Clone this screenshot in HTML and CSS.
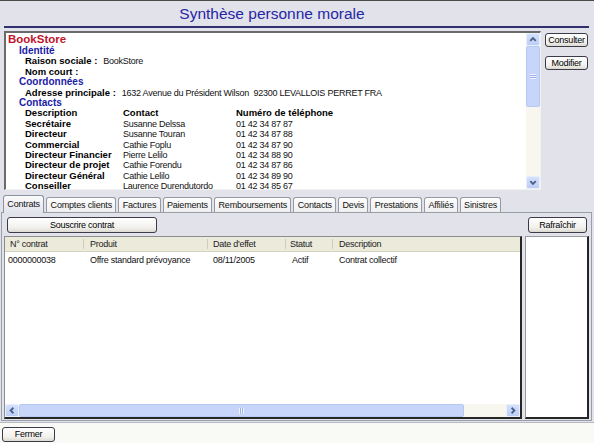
FILE: index.html
```html
<!DOCTYPE html>
<html lang="fr">
<head>
<meta charset="utf-8">
<title>Synthèse personne morale</title>
<link rel="stylesheet" href="styles.css">
</head>
<body>
<div class="window">
  <header class="head">
    <h1 class="title">Synthèse personne morale</h1>
    <div class="rule"></div>
  </header>

  <section class="top">
    <div class="info">
      <div class="info-body">
        <div class="company">BookStore</div>
        <div class="section">Identité</div>
        <div class="field"><b>Raison sociale :</b><span class="val">BookStore</span></div>
        <div class="field"><b>Nom court :</b></div>
        <div class="section">Coordonnées</div>
        <div class="field"><b>Adresse principale :</b><span class="val">1632 Avenue du Président Wilson&nbsp; 92300 LEVALLOIS PERRET FRA</span></div>
        <div class="section">Contacts</div>
        <div class="contacts">
          <b>Description</b><b>Contact</b><b>Numéro de téléphone</b>
          <b>Secrétaire</b><span>Susanne Delssa</span><span>01 42 34 87 87</span>
          <b>Directeur</b><span>Susanne Touran</span><span>01 42 34 87 88</span>
          <b>Commercial</b><span>Cathie Foplu</span><span>01 42 34 87 90</span>
          <b>Directeur Financier</b><span>Pierre Lelilo</span><span>01 42 34 88 90</span>
          <b>Directeur de projet</b><span>Cathie Forendu</span><span>01 42 34 87 86</span>
          <b>Directeur Général</b><span>Cathie Lelilo</span><span>01 42 34 89 90</span>
          <b>Conseiller</b><span>Laurence Durendutordo</span><span>01 42 34 85 67</span>
        </div>
      </div>
      <div class="vscroll">
        <div class="sb-btn"><svg width="13" height="13" viewBox="0 0 13 13"><polyline points="3.5,8 6.5,5 9.5,8" fill="none" stroke="#4d6185" stroke-width="2"/></svg></div>
        <div class="sb-thumb v"><span class="grip"></span></div>
        <div class="sb-track"></div>
        <div class="sb-btn"><svg width="13" height="13" viewBox="0 0 13 13"><polyline points="3.5,5 6.5,8 9.5,5" fill="none" stroke="#4d6185" stroke-width="2"/></svg></div>
      </div>
    </div>
    <div class="side">
      <button class="btn small">Consulter</button>
      <button class="btn small">Modifier</button>
    </div>
  </section>

  <nav class="tabs">
    <span class="tab active">Contrats</span>
    <span class="tab">Comptes clients</span>
    <span class="tab">Factures</span>
    <span class="tab">Paiements</span>
    <span class="tab">Remboursements</span>
    <span class="tab">Contacts</span>
    <span class="tab">Devis</span>
    <span class="tab">Prestations</span>
    <span class="tab">Affiliés</span>
    <span class="tab">Sinistres</span>
  </nav>

  <section class="panel">
    <div class="toolbar">
      <button class="btn wide">Souscrire contrat</button>
      <button class="btn refresh">Rafraîchir</button>
    </div>
    <div class="content">
      <div class="list">
        <div class="list-head">
          <span class="c1">N° contrat</span>
          <span class="c2">Produit</span>
          <span class="c3">Date d'effet</span>
          <span class="c4">Statut</span>
          <span class="c5">Description</span>
        </div>
        <div class="list-row">
          <span class="c1">0000000038</span>
          <span class="c2">Offre standard prévoyance</span>
          <span class="c3">08/11/2005</span>
          <span class="c4">Actif</span>
          <span class="c5">Contrat collectif</span>
        </div>
        <div class="list-fill"></div>
        <div class="hscroll">
          <div class="sb-btn h"><svg width="13" height="13" viewBox="0 0 13 13"><polyline points="8,3.5 5,6.5 8,9.5" fill="none" stroke="#4d6185" stroke-width="2"/></svg></div>
          <div class="sb-thumb hz"><span class="grip"></span></div>
          <div class="sb-track"></div>
          <div class="sb-btn h"><svg width="13" height="13" viewBox="0 0 13 13"><polyline points="5,3.5 8,6.5 5,9.5" fill="none" stroke="#4d6185" stroke-width="2"/></svg></div>
        </div>
      </div>
      <div class="aside"></div>
    </div>
  </section>

  <footer class="foot">
    <button class="btn close">Fermer</button>
  </footer>
</div>
</body>
</html>
```

FILE: styles.css
```css
* { box-sizing: border-box; }

html, body {
  margin: 0;
  padding: 0;
}

body {
  width: 594px;
  height: 443px;
  overflow: hidden;
  background: #e2e2eb;
  font-family: "Liberation Sans", Arial, sans-serif;
  font-size: 9px;
  color: #111;
}

.window {
  display: flex;
  flex-direction: column;
  height: 443px;
  border-top: 1px solid #4a4a4a;
}

/* header */
.head {
  padding: 0 5px 0 4px;
}

.title {
  margin: 0;
  width: 536px;
  padding-top: 1px;
  height: 25px;
  line-height: 24px;
  text-align: center;
  font-size: 15.5px;
  font-weight: normal;
  color: #2626a6;
}

.rule {
  height: 2px;
  background: #30306e;
}

/* top info */
.top {
  display: flex;
  margin-top: 3px;
  padding-left: 4px;
}

.info {
  display: flex;
  width: 537px;
  height: 159px;
  background: #fff;
  border-top: 2px solid #6a6a6a;
  border-left: 2px solid #6a6a6a;
  border-right: 1px solid #f2f2f2;
  border-bottom: 1px solid #f2f2f2;
}

.info-body {
  flex: 1;
  overflow: hidden;
  white-space: nowrap;
}

.company {
  height: 13px;
  line-height: 13px;
  padding-left: 2px;
  font-size: 11.5px;
  font-weight: bold;
  color: #c0142c;
}

.section {
  height: 10.4px;
  line-height: 10.4px;
  padding-left: 13px;
  font-size: 10px;
  font-weight: bold;
  color: #1c1ca8;
}

.field {
  height: 10.4px;
  line-height: 10.4px;
  padding-left: 19px;
}

.field b,
.contacts b {
  font-size: 9.5px;
  font-weight: bold;
  color: #000;
}

.val,
.contacts span,
.btn,
.list-head,
.list-row {
  letter-spacing: -0.25px;
}

.val {
  margin-left: 6px;
}

.contacts {
  display: grid;
  grid-template-columns: 98px 113px auto;
  grid-auto-rows: 10.4px;
  line-height: 10.4px;
  padding-left: 19px;
}

/* scrollbars */
.vscroll {
  width: 14px;
  display: flex;
  flex-direction: column;
  background: #f6f5ee;
}

.sb-btn {
  width: 14px;
  height: 13px;
  flex: none;
  display: flex;
  align-items: center;
  justify-content: center;
  background: linear-gradient(#d4e0fc, #bccdf6);
  border: 1px solid #e8eefc;
  border-radius: 2px;
}

.sb-thumb {
  flex: none;
  display: flex;
  align-items: center;
  justify-content: center;
  background: #c6d5f9;
  border: 1px solid #b6c9f3;
  border-radius: 2px;
}

.sb-thumb.v {
  height: 61px;
}

.sb-thumb .grip {
  width: 6px;
  height: 5px;
  background: repeating-linear-gradient(#eef3fe 0 1px, #9fb4e6 1px 2px);
}

.sb-thumb.hz {
  width: 445px;
  height: 13px;
}

.sb-thumb.hz .grip {
  width: 5px;
  height: 6px;
  background: repeating-linear-gradient(90deg, #eef3fe 0 1px, #9fb4e6 1px 2px);
}

.sb-track {
  flex: 1;
  background: #f7f6ef;
}

/* side buttons */
.side {
  display: flex;
  flex-direction: column;
  gap: 9px;
  margin-left: 4px;
  padding-top: 2px;
}

.btn {
  margin: 0;
  padding: 0;
  font-family: "Liberation Sans", Arial, sans-serif;
  font-size: 9px;
  color: #000;
  background: linear-gradient(#ffffff, #f1f0ec 70%, #dcd9d0);
  border: 1px solid #3b3b4a;
  border-radius: 3px;
  height: 15px;
  line-height: 13px;
}

.btn.small {
  width: 43px;
  height: 14px;
  line-height: 12px;
}

/* tabs */
.tabs {
  display: flex;
  align-items: flex-end;
  gap: 2px;
  height: 17px;
  margin-top: 5px;
  padding-left: 3px;
  position: relative;
  z-index: 1;
}

.tab {
  height: 15px;
  line-height: 14px;
  padding: 0 3.3px;
  letter-spacing: -0.17px;
  border: 1px solid #939aa6;
  border-bottom: none;
  border-radius: 3px 3px 0 0;
  background: linear-gradient(#fdfdfd, #efefef);
  white-space: nowrap;
}

.tab.active {
  height: 18px;
  line-height: 16px;
  margin-bottom: -1px;
  background: linear-gradient(#fbfbfb, #e2e2eb);
  border-color: #8a93a2;
}

/* panel */
.panel {
  margin: 0 2px 0 1px;
  border: 1px solid #999fa9;
  padding: 4px 2px 1px 2px;
  display: flex;
  flex-direction: column;
}

.toolbar {
  display: flex;
  justify-content: space-between;
  padding: 0 2px 0 3px;
  height: 16px;
}

.btn.wide {
  width: 150px;
  height: 16px;
  line-height: 14px;
}

.btn.refresh {
  width: 59px;
  height: 16px;
  line-height: 14px;
}

.content {
  display: flex;
  gap: 3px;
  margin-top: 3px;
  height: 183px;
}

.list {
  width: 518px;
  display: flex;
  flex-direction: column;
  background: #fff;
  border-top: 1px solid #8c8c8c;
  border-left: 1px solid #8c8c8c;
  border-right: 2px solid #262626;
  border-bottom: 2px solid #262626;
}

.list-head,
.list-row {
  display: grid;
  grid-template-columns: 79px 124px 78px 47px 1fr;
  white-space: nowrap;
}

.list-head {
  height: 15px;
  line-height: 14px;
  background: #ebeadb;
  border-bottom: 1px solid #d5d2c2;
  color: #222;
}

.list-head span {
  border-right: 1px solid #d0cdbc;
  margin: 2px 0;
  line-height: 10px;
}

.list-head span:last-child {
  border-right: none;
}

.list-row {
  height: 14px;
  line-height: 14px;
  margin-top: 1px;
}

.c1 { padding-left: 5px; }
.c2 { padding-left: 6px; }
.c3 { padding-left: 5px; }
.c4 { padding-left: 4px; }
.c5 { padding-left: 6px; }

.list-row .c1 { padding-left: 3px; }
.list-row .c4 { padding-left: 6px; }

.list-fill {
  flex: 1;
}

.hscroll {
  display: flex;
  height: 13px;
  background: #f7f6ef;
}

.aside {
  flex: 1;
  background: #fff;
  border-top: 1px solid #9a9a9a;
  border-left: 1px solid #9a9a9a;
  border-right: 2px solid #262626;
  border-bottom: 2px solid #262626;
}

/* footer */
.foot {
  flex: 1;
  margin-top: 1px;
  border-top: 1px solid #b9b9c2;
  background: #f9f9f5;
  padding: 4px 0 0 2px;
}

.btn.close {
  width: 53px;
  height: 15px;
}
```
